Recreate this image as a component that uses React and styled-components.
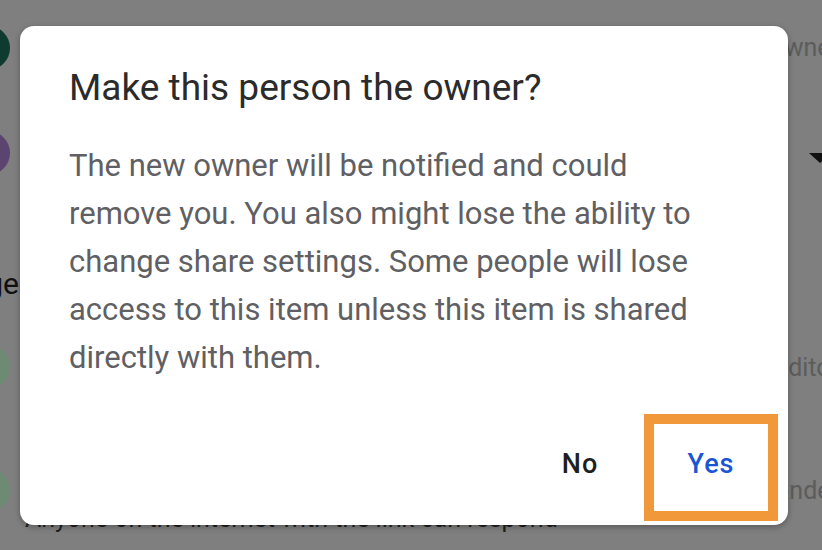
import React from 'react'
import styled, { createGlobalStyle } from 'styled-components'

const GlobalStyle = createGlobalStyle`
    html, body {
        margin: 0;
        padding: 0;
        background: #7f7f7f;
        font-family: Roboto, "Liberation Sans", sans-serif;
    }
`

const people = [
    { color: '#0e3a2f', height: 95, role: 'Owner' },
    { color: '#5b4470', height: 115, select: true },
]

const links = [
    { color: '#6d8a72', height: 108, role: 'Editor', name: 'Editor link' },
    {
        color: '#6d8a72',
        height: 138,
        role: 'Responder',
        name: 'Responder link',
        hint: 'Anyone on the internet with the link can respond',
    },
]

function App() {
    return (
        <Screen>
            <GlobalStyle />
            <Backdrop>
                {people.map((p, i) => (
                    <Row key={i} $height={p.height}>
                        <Avatar $color={p.color} />
                        <span />
                        {p.select ? <Caret /> : <Role>{p.role}</Role>}
                    </Row>
                ))}
                <Section>
                    <span>Manage</span>
                </Section>
                {links.map((p, i) => (
                    <Row key={i} $height={p.height}>
                        <Avatar $color={p.color} />
                        <Info>
                            <Name>{p.name}</Name>
                            {p.hint && <Hint>{p.hint}</Hint>}
                        </Info>
                        <Role>{p.role}</Role>
                    </Row>
                ))}
            </Backdrop>

            <Dialog>
                <Title>Make this person the owner?</Title>
                <Message>
                    The new owner will be notified and could remove you. You also might lose the ability to
                    change share settings. Some people will lose access to this item unless this item is
                    shared directly with them.
                </Message>
                <Actions>
                    <Action>No</Action>
                    <Action $primary $focused>Yes</Action>
                </Actions>
            </Dialog>
        </Screen>
    )
}

export default App


const Screen = styled.div`
    position: relative;
    width: 822px;
    height: 550px;
    overflow: hidden;
    background: #7f7f7f;
`

const Backdrop = styled.div`
    display: flex;
    flex-direction: column;
    width: 880px;
    margin-left: -34px;
`

const Row = styled.div`
    display: grid;
    grid-template-columns: 44px 1fr auto;
    column-gap: 15px;
    align-items: center;
    height: ${(p) => p.$height}px;
    padding-right: 7px;
`

const Avatar = styled.div`
    width: 44px;
    height: 44px;
    border-radius: 50%;
    background: ${(p) => p.$color};
`

const Info = styled.div`
    display: flex;
    flex-direction: column;
    gap: 4px;
    padding-top: 22px;
`

const Name = styled.span`
    font-size: 26px;
    color: #1f1f1f;
`

const Hint = styled.span`
    font-size: 25px;
    color: #1f1f1f;
`

const Role = styled.span`
    font-size: 25px;
    color: #5c5c5c;
`

const Caret = styled.span`
    width: 0;
    height: 0;
    margin: 10px 8px 0 0;
    border-left: 11px solid transparent;
    border-right: 11px solid transparent;
    border-top: 10px solid #111;
`

const Section = styled.div`
    display: flex;
    align-items: center;
    justify-content: flex-end;
    width: 53px;
    height: 60px;
    margin-top: 43px;
    font-size: 30px;
    color: #101010;
    white-space: nowrap;

    span {
        flex-shrink: 0;
    }
`

const Dialog = styled.div`
    position: absolute;
    top: 26px;
    left: 20px;
    width: 768px;
    height: 499px;
    box-sizing: border-box;
    display: flex;
    flex-direction: column;
    padding: 40px 10px 4px 49px;
    background: #fff;
    border-radius: 14px;
    box-shadow: 0 2px 6px rgba(0, 0, 0, 0.3);
`

const Title = styled.h2`
    margin: 0;
    font-size: 37px;
    font-weight: 400;
    line-height: 44px;
    color: #2b2b2b;
`

const Message = styled.p`
    margin: 32px 0 0;
    width: 665px;
    font-size: 31px;
    line-height: 48px;
    color: #5f6063;
`

const Actions = styled.div`
    display: flex;
    justify-content: flex-end;
    align-items: center;
    margin-top: auto;
`

const Action = styled.button`
    width: ${(p) => (p.$focused ? 134 : 128)}px;
    height: 107px;
    box-sizing: border-box;
    padding: 0 0 8px;
    border: ${(p) => (p.$focused ? '10px solid #f0983a' : 'none')};
    background: #fff;
    font-family: Roboto, "Liberation Sans", sans-serif;
    font-size: 27px;
    font-weight: 500;
    letter-spacing: 1px;
    color: ${(p) => (p.$primary ? '#1a56d3' : '#1f1f1f')};
    cursor: pointer;
`
